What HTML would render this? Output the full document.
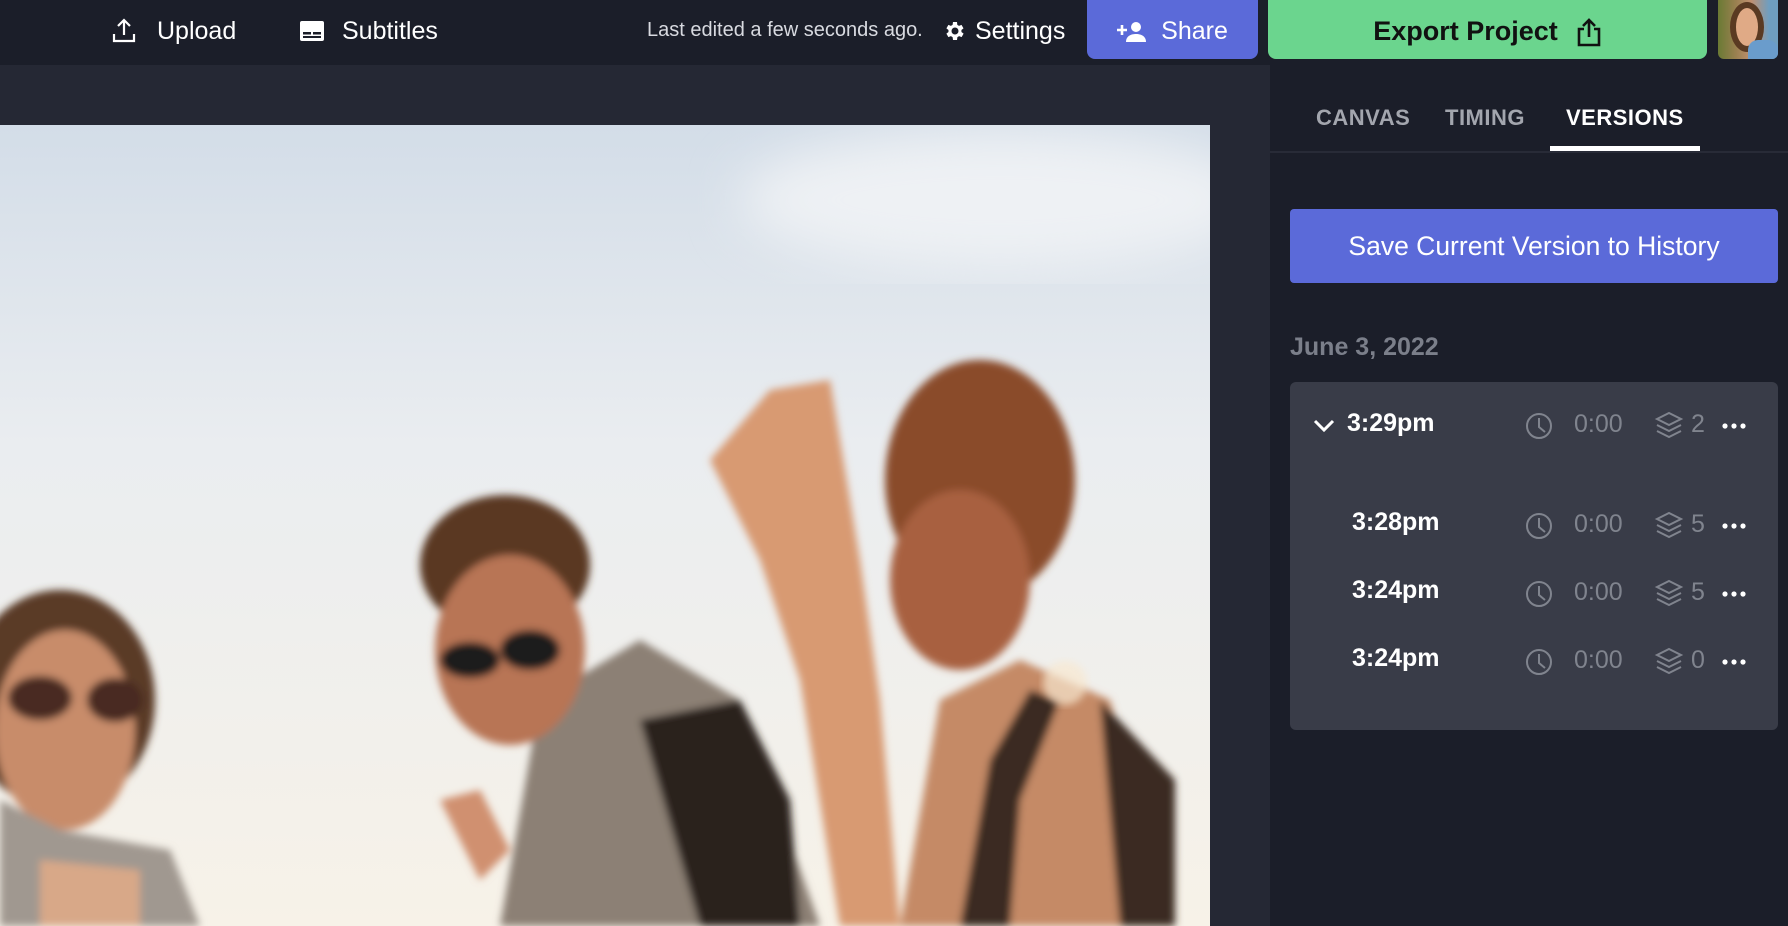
<!DOCTYPE html>
<html><head><meta charset="utf-8"><style>
*{margin:0;padding:0;box-sizing:border-box}
body{width:1788px;height:926px;overflow:hidden;background:#252834;font-family:"Liberation Sans",sans-serif;position:relative;color:#fff}
.top{position:absolute;left:0;top:0;width:1788px;height:65px;background:#1b1e29}
.abs{position:absolute}
.t{font-size:25px;color:#fff;top:17px}
.btn{position:absolute;top:0;height:59px;border-radius:0 0 8px 8px;display:flex;align-items:center;justify-content:center;font-size:25px;padding-top:4px}
.panel{position:absolute;left:1270px;top:65px;width:518px;height:861px;background:#1b1e29}
.tab{position:absolute;top:40px;font-size:22px;font-weight:bold;color:#a3a6ae;letter-spacing:.5px}
.card{position:absolute;left:20px;top:317px;width:488px;height:348px;background:#393c48;border-radius:6px}
.row{position:absolute;left:0;width:488px;height:40px}
.time{position:absolute;font-size:25px;font-weight:bold;color:#fff;top:4px}
</style></head><body>
<div class="top"></div>
<svg class="abs" style="left:112px;top:18px" width="24" height="26" viewBox="0 0 24 26" fill="none" stroke="#fff" stroke-width="2.2"><path d="M12 17V3M6 8l6-6 6 6M2 16v7h20v-7"/></svg>
<div class="abs t" style="left:157px">Upload</div>
<svg class="abs" style="left:300px;top:21px" width="24" height="20" viewBox="0 0 24 20"><rect x="0" y="0" width="24" height="20" rx="2" fill="#fff"/><rect x="3" y="11" width="8" height="2.5" fill="#1b1e29"/><rect x="13" y="11" width="8" height="2.5" fill="#1b1e29"/><rect x="3" y="15" width="18" height="2" fill="#1b1e29"/></svg>
<div class="abs t" style="left:342px">Subtitles</div>
<div class="abs" style="left:647px;top:19px;font-size:20px;color:#d8dae0">Last edited a few seconds ago.</div>
<svg class="abs" style="left:942px;top:19px" width="24" height="24" viewBox="0 0 24 24"><path fill="#fff" d="M19.4 13a7.5 7.5 0 000-2l2.1-1.6-2-3.5-2.5 1a7 7 0 00-1.7-1L15 3h-4l-.4 2.9a7 7 0 00-1.7 1l-2.5-1-2 3.5L6.5 11a7.5 7.5 0 000 2l-2.1 1.6 2 3.5 2.5-1a7 7 0 001.7 1L11 21h4l.4-2.9a7 7 0 001.7-1l2.5 1 2-3.5zM13 15.5A3.5 3.5 0 1113 8.5a3.5 3.5 0 010 7z"/></svg>
<div class="abs t" style="left:975px">Settings</div>
<div class="btn" style="left:1087px;width:171px;background:#5b6ad9">
<svg width="30" height="22" viewBox="0 0 30 22" style="margin-right:14px"><circle cx="19" cy="6" r="5" fill="#fff"/><path d="M9 21c0-6 5-8 10-8s10 2 10 8z" fill="#fff"/><path d="M5 4v10M0 9h10" stroke="#fff" stroke-width="2.6"/></svg>Share</div>
<div class="btn" style="left:1268px;width:439px;background:#6bd58e;color:#111;font-weight:bold;font-size:27px">Export Project
<svg width="26" height="30" viewBox="0 0 26 30" style="margin-left:18px" fill="none" stroke="#111" stroke-width="2.6"><path d="M13 20V3M7 9l6-6 6 6M8 12H3v16h20V12h-5"/></svg></div>
<div class="abs" style="left:1718px;top:0;width:60px;height:59px;border-radius:0 0 6px 6px;overflow:hidden;background:linear-gradient(90deg,#6a7a34,#9a8050 30%,#c09070 55%,#6f9ec0 85%)"><div style="position:absolute;left:12px;top:2px;width:34px;height:50px;border-radius:50%;background:#e0aa86;border:6px solid #5a3a22"></div><div style="position:absolute;left:30px;top:40px;width:30px;height:20px;background:#6a9ccc;border-radius:10px 10px 0 0"></div></div>

<svg class="abs" style="left:0;top:125px" width="1210" height="801" viewBox="0 125 1210 801">
<defs>
<linearGradient id="sky" x1="0" y1="0" x2="0" y2="1"><stop offset="0" stop-color="#d3dde8"/><stop offset=".4" stop-color="#eaedf0"/><stop offset="1" stop-color="#f7f2e8"/></linearGradient>
<filter id="b"><feGaussianBlur stdDeviation="25"/></filter>
<filter id="b2"><feGaussianBlur stdDeviation="4"/></filter>
</defs>
<rect x="0" y="125" width="1210" height="801" fill="url(#sky)"/>
<ellipse cx="1000" cy="200" rx="260" ry="70" fill="#eef1f4" filter="url(#b)"/>
<g filter="url(#b2)">
<path d="M900 926 L940 700 L1020 660 L1110 700 L1175 926Z" fill="#c58a66"/>
<path d="M960 926 L990 760 L1030 690 L1060 700 L1020 800 L1010 926Z" fill="#3a2c24"/>
<path d="M1100 700 L1175 780 L1175 926 L1120 926Z" fill="#3a2c24"/>
<ellipse cx="980" cy="480" rx="95" ry="120" fill="#8a4c2a"/>
<ellipse cx="960" cy="580" rx="70" ry="90" fill="#a86040"/>
<path d="M770 390 L830 380 L860 560 L880 700 L900 926 L840 926 L800 680 L760 560 L710 460Z" fill="#d89a72"/>
<path d="M640 690 L720 690 L760 850 L740 926 L680 926Z" fill="#d09068"/>
<path d="M500 926 L540 700 L640 640 L740 700 L820 926Z" fill="#8c8074"/>
<path d="M640 720 L740 700 L790 800 L800 926 L700 926Z" fill="#2a221e"/>
<ellipse cx="505" cy="565" rx="85" ry="70" fill="#5a3822"/>
<ellipse cx="510" cy="650" rx="75" ry="95" fill="#b87454"/>
<ellipse cx="470" cy="660" rx="30" ry="18" fill="#1a1a1a"/>
<ellipse cx="530" cy="650" rx="30" ry="20" fill="#1a1a1a"/>
<path d="M440 800 L480 790 L510 850 L480 880Z" fill="#d09070"/>
<ellipse cx="60" cy="700" rx="95" ry="110" fill="#5a3a28"/>
<ellipse cx="65" cy="730" rx="70" ry="100" fill="#c88c6a"/>
<ellipse cx="40" cy="698" rx="32" ry="22" fill="#4a2a22"/>
<ellipse cx="115" cy="700" rx="28" ry="22" fill="#4a2a22"/>
<path d="M0 800 L60 830 L170 850 L200 926 L0 926Z" fill="#a09890"/>
<path d="M40 860 L140 870 L140 926 L40 926Z" fill="#d8a888"/>
</g>
<circle cx="1065" cy="683" r="22" fill="#f8e8d0" opacity=".7" filter="url(#b2)"/>
</svg>

<div class="panel">
<div class="tab" style="left:46px">CANVAS</div>
<div class="tab" style="left:175px">TIMING</div>
<div class="tab" style="left:296px;color:#fff">VERSIONS</div>
<div class="abs" style="left:0;top:86px;width:518px;height:2px;background:#282b37"></div>
<div class="abs" style="left:280px;top:81px;width:150px;height:5px;background:#fff"></div>
<div class="abs" style="left:20px;top:144px;width:488px;height:74px;background:#5b6ad9;border-radius:4px;font-size:26.5px;display:flex;align-items:center;justify-content:center">Save Current Version to History</div>
<div class="abs" style="left:20px;top:268px;font-size:25px;font-weight:bold;color:#7b7f8a">June 3, 2022</div>
<div class="card">
<svg class="abs" style="left:23px;top:37px" width="22" height="14" viewBox="0 0 22 14" fill="none" stroke="#fff" stroke-width="3"><path d="M2 2l9 9 9-9"/></svg>
<div class="row" style="top:23px"><div class="time" style="left:57px">3:29pm</div></div>
<div class="row" style="top:122px"><div class="time" style="left:62px">3:28pm</div></div>
<div class="row" style="top:190px"><div class="time" style="left:62px">3:24pm</div></div>
<div class="row" style="top:258px"><div class="time" style="left:62px">3:24pm</div></div>
</div>
</div>
<svg class="abs" style="left:1290px;top:382px" width="488" height="348">
<g id="m">
<circle cx="249" cy="44" r="12" fill="none" stroke="#80848e" stroke-width="2"/><path d="M249 36v9l6 5" fill="none" stroke="#80848e" stroke-width="2"/>
<text x="284" y="50" font-family="Liberation Sans" font-size="25" fill="#80848e">0:00</text>
<g fill="none" stroke="#80848e" stroke-width="2"><path d="M367 37l12-6 12 6-12 6z"/><path d="M367 43l12 6 12-6"/><path d="M367 49l12 6 12-6"/></g>
<circle cx="435" cy="44" r="2.6" fill="#fff"/><circle cx="444" cy="44" r="2.6" fill="#fff"/><circle cx="453" cy="44" r="2.6" fill="#fff"/>
</g>
<text x="401" y="50" font-family="Liberation Sans" font-size="25" fill="#80848e">2</text>
<use href="#m" y="100"/><text x="401" y="150" font-family="Liberation Sans" font-size="25" fill="#80848e">5</text>
<use href="#m" y="168"/><text x="401" y="218" font-family="Liberation Sans" font-size="25" fill="#80848e">5</text>
<use href="#m" y="236"/><text x="401" y="286" font-family="Liberation Sans" font-size="25" fill="#80848e">0</text>
</svg>
</body></html>
